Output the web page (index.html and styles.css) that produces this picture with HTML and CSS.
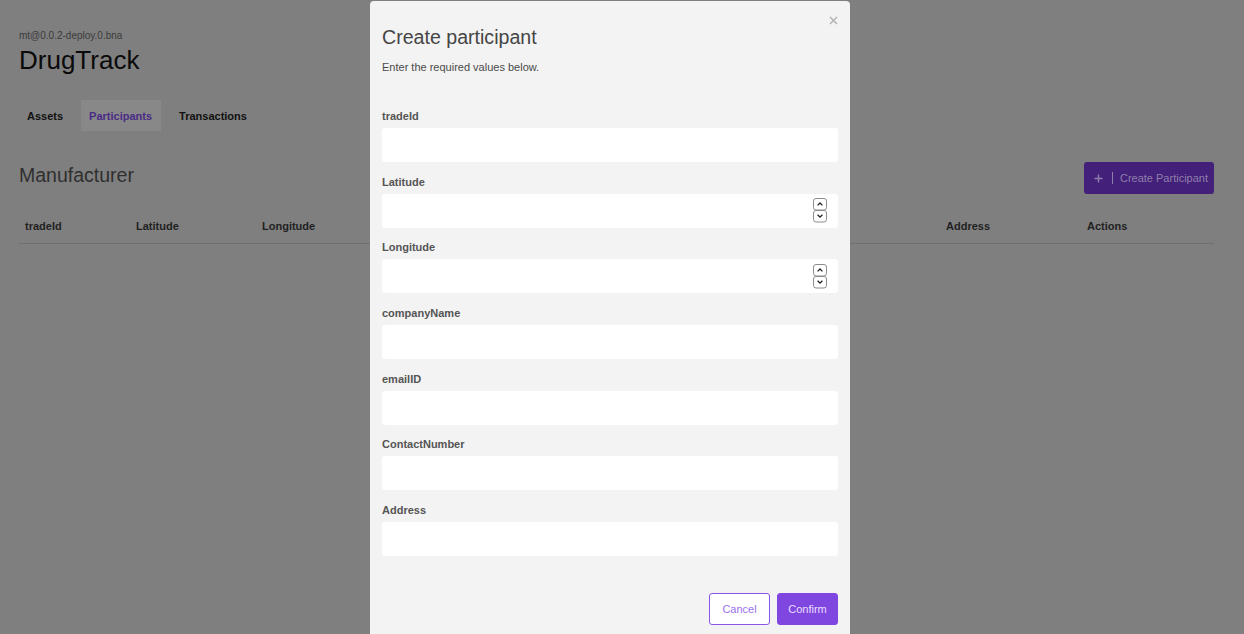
FILE: index.html
```html
<!DOCTYPE html>
<html lang="en">
<head>
<meta charset="utf-8">
<title>DrugTrack</title>
<link rel="stylesheet" href="styles.css">
</head>
<body>
<div class="page">
  <header class="app-header">
    <div class="network">mt@0.0.2-deploy.0.bna</div>
    <h1 class="app-title">DrugTrack</h1>
  </header>
  <nav class="tabs">
    <a class="tab">Assets</a>
    <a class="tab active">Participants</a>
    <a class="tab">Transactions</a>
  </nav>
  <main class="content">
    <div class="content-head">
      <h2 class="section-title">Manufacturer</h2>
      <button class="create-btn">
        <svg class="plus" width="9" height="9" viewBox="0 0 9 9"><path d="M4.5 0.5V8.5M0.5 4.5H8.5" stroke="#8f7fab" stroke-width="1.4" fill="none"/></svg>
        <span class="sep"></span>
        <span>Create Participant</span>
      </button>
    </div>
    <table class="grid">
      <colgroup>
        <col class="c1"><col class="c2"><col class="c3"><col class="c4"><col class="c5"><col class="c6"><col class="c7"><col class="c8">
      </colgroup>
      <thead>
        <tr>
          <th>tradeId</th><th>Latitude</th><th>Longitude</th><th>companyName</th><th>emailID</th><th>ContactNumber</th><th>Address</th><th>Actions</th>
        </tr>
      </thead>
    </table>
  </main>
</div>

<div class="modal">
  <button class="close" aria-label="Close">
    <svg width="9" height="9" viewBox="0 0 9 9"><path d="M1 1L8 8M8 1L1 8" stroke="#b4b4b4" stroke-width="1.5" fill="none"/></svg>
  </button>
  <div class="modal-header">
    <h3 class="modal-title">Create participant</h3>
    <p class="modal-sub">Enter the required values below.</p>
  </div>
  <div class="modal-body">
    <div class="field">
      <label>tradeId</label>
      <div class="input"><input type="text"></div>
    </div>
    <div class="field">
      <label>Latitude</label>
      <div class="input"><input type="text">
        <svg class="spin" width="14" height="25" viewBox="0 0 14 25"><rect x="0.5" y="0.5" width="13" height="11.5" rx="2.5" fill="#fff" stroke="#8c8c8c"/><rect x="0.5" y="12.5" width="13" height="11.5" rx="2.5" fill="#fff" stroke="#8c8c8c"/><path d="M4.6 7.4L7 5L9.4 7.4" stroke="#222" stroke-width="1.3" fill="none"/><path d="M4.6 16.8L7 19.2L9.4 16.8" stroke="#222" stroke-width="1.3" fill="none"/></svg>
      </div>
    </div>
    <div class="field">
      <label>Longitude</label>
      <div class="input"><input type="text">
        <svg class="spin" width="14" height="25" viewBox="0 0 14 25"><rect x="0.5" y="0.5" width="13" height="11.5" rx="2.5" fill="#fff" stroke="#8c8c8c"/><rect x="0.5" y="12.5" width="13" height="11.5" rx="2.5" fill="#fff" stroke="#8c8c8c"/><path d="M4.6 7.4L7 5L9.4 7.4" stroke="#222" stroke-width="1.3" fill="none"/><path d="M4.6 16.8L7 19.2L9.4 16.8" stroke="#222" stroke-width="1.3" fill="none"/></svg>
      </div>
    </div>
    <div class="field">
      <label>companyName</label>
      <div class="input"><input type="text"></div>
    </div>
    <div class="field">
      <label>emailID</label>
      <div class="input"><input type="text"></div>
    </div>
    <div class="field">
      <label>ContactNumber</label>
      <div class="input"><input type="text"></div>
    </div>
    <div class="field">
      <label>Address</label>
      <div class="input"><input type="text"></div>
    </div>
  </div>
  <div class="modal-footer">
    <button class="btn btn-cancel">Cancel</button>
    <button class="btn btn-confirm">Confirm</button>
  </div>
</div>
</body>
</html>
```

FILE: styles.css
```css
* { box-sizing: border-box; }

html, body {
  margin: 0;
  padding: 0;
}

body {
  background: #7f7f7f;
  font-family: "Liberation Sans", Arial, Helvetica, sans-serif;
  color: #222;
  height: 634px;
  overflow: hidden;
  position: relative;
}

.page {
  padding: 0 30px 0 19px;
}

.app-header {
  padding-top: 30px;
}

.network {
  font-size: 10px;
  line-height: 12px;
  color: #3b3b3b;
}

.app-title {
  margin: 3px 0 0;
  font-size: 26px;
  line-height: 30px;
  font-weight: normal;
  color: #0a0a0a;
}

.tabs {
  display: flex;
  gap: 10px;
  margin-top: 25px;
  height: 31px;
}

.tab {
  padding: 1px 8px 0;
  font-size: 11px;
  line-height: 30px;
  font-weight: bold;
  color: #111;
}

.tab.active {
  background: #888888;
  color: #4a2c86;
  padding-right: 9px;
}

.content-head {
  margin-top: 31px;
  height: 32px;
  display: flex;
  align-items: center;
  justify-content: space-between;
}

.section-title {
  margin: 0;
  font-size: 19.5px;
  font-weight: normal;
  color: #2f2f2f;
  line-height: 24px;
  position: relative;
  top: -3px;
}

.create-btn {
  height: 32px;
  border: none;
  border-radius: 3px;
  background: #43207a;
  color: #8f7fab;
  font-family: inherit;
  font-size: 11px;
  display: flex;
  align-items: center;
  padding: 0 6px 0 10px;
}

.create-btn .plus {
  display: block;
}

.create-btn .sep {
  width: 1px;
  height: 12px;
  background: #8f7fab;
  margin: 0 7px 0 9px;
}

.grid {
  margin-top: 16px;
  width: 100%;
  border-collapse: collapse;
  table-layout: fixed;
}

.grid .c1 { width: 111px; }
.grid .c2 { width: 126px; }
.grid .c3 { width: 160px; }
.grid .c4 { width: 175px; }
.grid .c5 { width: 160px; }
.grid .c6 { width: 189px; }
.grid .c7 { width: 141px; }
.grid .c8 { width: auto; }

.grid th {
  text-align: left;
  font-size: 11px;
  line-height: 13px;
  font-weight: bold;
  color: #1f1f1f;
  padding: 10px 6px;
  border-bottom: 1px solid #6f6f6f;
  white-space: nowrap;
  overflow: hidden;
}

/* modal */
.modal {
  position: absolute;
  left: 370px;
  top: 1px;
  width: 480px;
  background: #f3f3f3;
  border-radius: 4px;
  padding: 0 12px 20px;
}

.close {
  position: absolute;
  top: 15px;
  right: 12px;
  border: none;
  background: none;
  padding: 0;
  width: 9px;
  height: 9px;
  display: block;
}

.close svg { display: block; }

.modal-header {
  padding: 24px 0 21px;
}

.modal-title {
  margin: 0;
  font-size: 19.6px;
  line-height: 24px;
  font-weight: normal;
  color: #454545;
}

.modal-sub {
  margin: 12px 0 0;
  font-size: 11px;
  line-height: 13px;
  color: #4a4a4a;
}

.modal-body {
  padding: 15px 0 24px;
  display: flex;
  flex-direction: column;
  gap: 13.67px;
}

.field {
  display: flex;
  flex-direction: column;
}

.field label {
  font-size: 11px;
  line-height: 13px;
  font-weight: bold;
  color: #555;
  margin-bottom: 5px;
}

.input {
  height: 34px;
  background: #fff;
  border-radius: 3px;
  display: flex;
  align-items: center;
  padding: 0 11px 0 10px;
}

.input input {
  flex: 1;
  min-width: 0;
  border: none;
  outline: none;
  background: transparent;
  font-family: inherit;
  font-size: 11px;
  padding: 0;
}

.input .spin {
  display: block;
  flex: none;
}

.modal-footer {
  padding-top: 13px;
  display: flex;
  justify-content: flex-end;
  gap: 7px;
}

.btn {
  height: 32px;
  width: 61px;
  border-radius: 3px;
  font-family: inherit;
  font-size: 11px;
  padding: 0;
}

.btn-cancel {
  background: #fff;
  border: 1px solid #8a55e8;
  color: #9a70ee;
}

.btn-confirm {
  background: #8047e0;
  border: 1px solid #8047e0;
  color: #ecdfff;
}
```
